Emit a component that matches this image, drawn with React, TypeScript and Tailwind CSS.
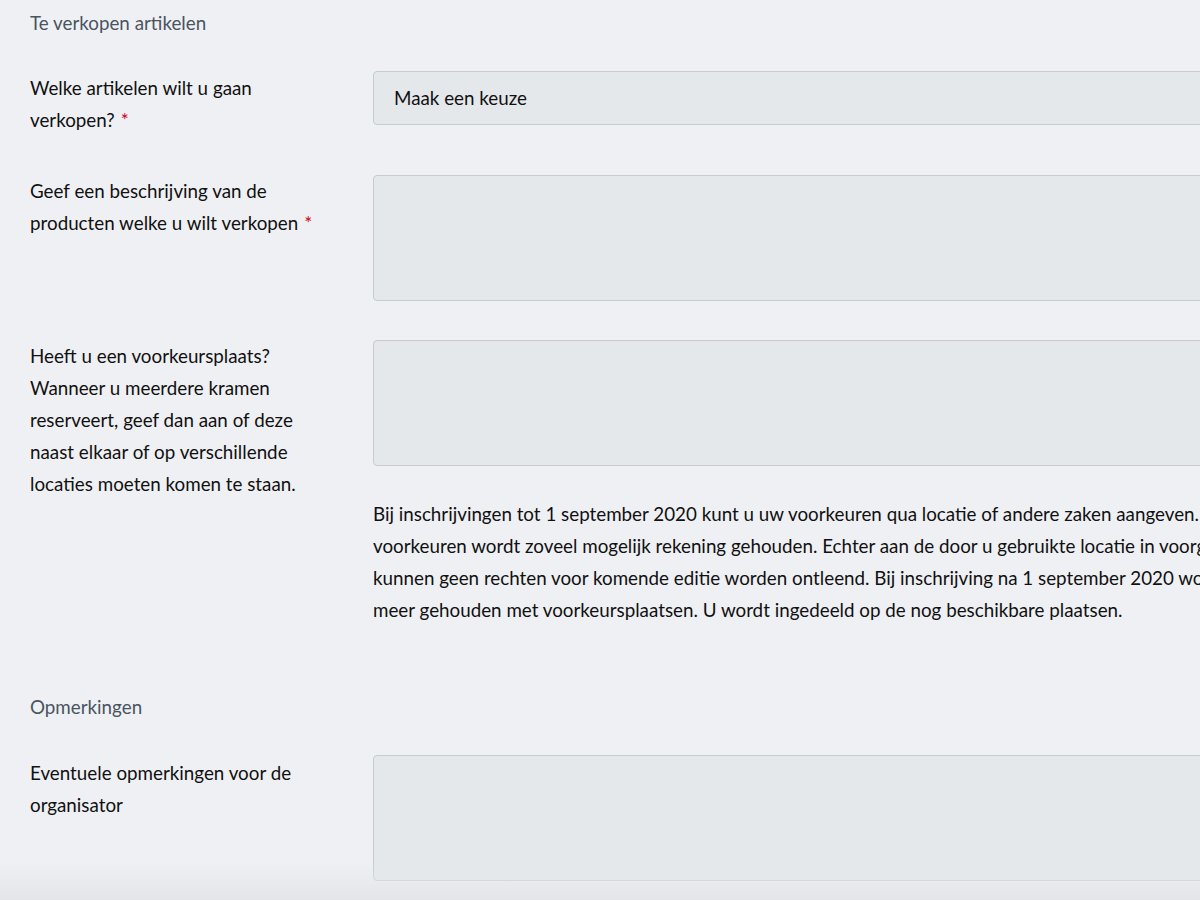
import React from "react";

const font = { fontFamily: "Lato, 'Noto Sans', sans-serif" };

function Req() {
  return <span className="text-[#d0021b] ml-[6px]">*</span>;
}

export default function App() {
  return (
    <div
      className="relative w-[1200px] h-[900px] overflow-hidden bg-[#eff0f4] text-[18.8px] leading-[32px] text-[#111111]"
      style={font}
    >
      <div className="pl-[30px] pt-[7px]">
        <div className="text-[#4a5461] h-[32px]">Te verkopen artikelen</div>

        <div className="flex mt-[33px]">
          <div className="w-[343px] shrink-0">
            Welke artikelen wilt u gaan
            <br />
            verkopen?
            <Req />
          </div>
          <div className="w-[900px] shrink-0 h-[54px] mt-[-1px] rounded-[4px] border border-[#c7cacf] bg-[#e5e8eb] flex items-center pl-[20px]">
            Maak een keuze
          </div>
        </div>

        <div className="flex mt-[39px]">
          <div className="w-[343px] shrink-0">
            Geef een beschrijving van de
            <br />
            producten welke u wilt verkopen
            <Req />
          </div>
          <div className="w-[900px] shrink-0 h-[126px] rounded-[4px] border border-[#c7cacf] bg-[#e5e8eb]" />
        </div>

        <div className="flex mt-[39px]">
          <div className="w-[343px] shrink-0">
            Heeft u een voorkeursplaats?
            <br />
            Wanneer u meerdere kramen
            <br />
            reserveert, geef dan aan of deze
            <br />
            naast elkaar of op verschillende
            <br />
            locaties moeten komen te staan.
          </div>
          <div className="w-[900px] shrink-0">
            <div className="h-[126px] rounded-[4px] border border-[#c7cacf] bg-[#e5e8eb]" />
            <div className="mt-[32px] whitespace-nowrap">
              <div>Bij inschrijvingen tot 1 september 2020 kunt u uw voorkeuren qua locatie of andere zaken aangeven. Met uw</div>
              <div>voorkeuren wordt zoveel mogelijk rekening gehouden. Echter aan de door u gebruikte locatie in voorgaande jaren</div>
              <div>kunnen geen rechten voor komende editie worden ontleend. Bij inschrijving na 1 september 2020 wordt geen rekening</div>
              <div>meer gehouden met voorkeursplaatsen. U wordt ingedeeld op de nog beschikbare plaatsen.</div>
            </div>
          </div>
        </div>

        <div className="text-[#4a5461] mt-[65px] h-[32px]">Opmerkingen</div>

        <div className="flex mt-[32px]">
          <div className="w-[343px] shrink-0 mt-[2px]">
            Eventuele opmerkingen voor de
            <br />
            organisator
          </div>
          <div className="w-[900px] shrink-0 h-[126px] rounded-[4px] border border-[#c7cacf] bg-[#e5e8eb]" />
        </div>
      </div>
      <div className="pointer-events-none absolute left-0 right-0 bottom-0 h-[38px] bg-gradient-to-b from-[#eff0f4]/0 to-[#e3e5e9]" />
    </div>
  );
}
